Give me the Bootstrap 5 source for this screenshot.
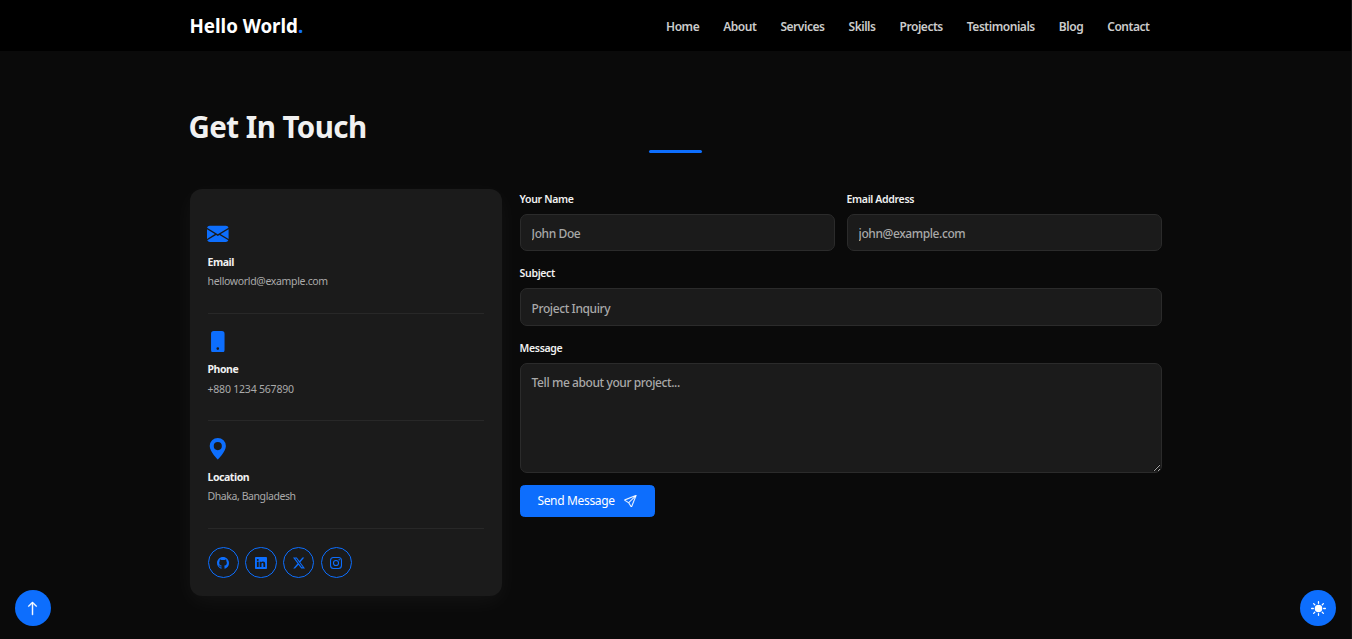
<!DOCTYPE html>
<html lang="en">
<head>
<meta charset="utf-8">
<meta name="viewport" content="width=device-width, initial-scale=1">
<title>Hello World</title>
<link href="https://cdn.jsdelivr.net/npm/bootstrap@5.3.0/dist/css/bootstrap.min.css" rel="stylesheet">
<style>
  body{background:#0a0a0a;color:#f1f1f1;font-family:"Noto Sans",sans-serif;font-size:12px;height:639px;overflow:hidden;border-right:1px solid #141414}
  .page-wrap{width:972px;max-width:100%;margin:0 auto}
  .navbar{height:51px;background:#000}
  .brand-name{font-size:18.75px;font-weight:700;color:#fff;letter-spacing:-.02px;line-height:27px}
  .brand-name span{color:#0d6efd}
  .menu-links{gap:24px;padding-right:12px}
  .menu-links .nav-link{color:#ccc;font-weight:600;font-size:12px;line-height:18px;letter-spacing:-.46px;padding:2px 0 0}
  .section-head{height:138px;padding-top:58px}
  .section-head h2{font-size:29.5px;font-weight:700;line-height:36px;margin:0 0 0 -1px;height:36px;letter-spacing:-.55px}
  .head-bar{width:52.5px;height:3px;border-radius:2px;background:#0d6efd;margin:5px auto 0}
  .info-card{width:312px;height:407px;background:#1b1b1b;border-radius:12px;padding:17.4px 18px 0;box-shadow:0 6px 22px rgba(255,255,255,.045)}
  .info-item{height:107.5px;border-bottom:1px solid #282828;padding-top:16.8px}
  .info-item svg{width:21.6px;height:21.6px;display:block;fill:#0d6efd;margin-left:-.6px}
  .info-item h5{font-size:10.5px;font-weight:700;line-height:14px;margin:9.8px 0 0;letter-spacing:-.45px}
  .info-item p{font-size:10.5px;line-height:16px;margin:4.5px 0 0;color:#aaa;letter-spacing:-.33px}
  .social-row{gap:6.2px;padding-top:18px}
  .social-btn{width:31.5px;height:31.5px;border:1px solid #0d6efd;border-radius:50%}
  .social-btn svg{width:12px;height:12px;fill:#0d6efd}
  .contact-form{width:642px;margin-right:-.1px}
  .form-label{font-size:10.5px;font-weight:600;line-height:16px;margin:0 0 6.9px;letter-spacing:-.33px;display:block;padding-top:2px}
  .form-control,.form-control:focus{background:#1b1b1b;border:1px solid #2b2b2b;color:#eee;border-radius:7px;height:37.5px;font-size:12px;line-height:18px;padding:10px 11px 8px;letter-spacing:-.41px;box-shadow:none}
  .form-control::placeholder{color:#a9a9a9;opacity:1;font-weight:500}
  textarea.form-control{height:110px}
  .send-btn{width:135px;height:32px;font-size:12px;border-radius:4.5px;padding:1px 0 0;margin-top:12px;background:#0d6efd;letter-spacing:-.33px}
  .send-btn svg{margin-left:9.5px}
  .round-btn{width:36px;height:36px;bottom:13px;background:#0d6efd;border:0;border-radius:50%;padding:0}
</style>
</head>
<body>
<nav class="navbar p-0">
  <div class="page-wrap d-flex align-items-center justify-content-between">
    <a class="brand-name text-decoration-none" href="#">Hello World<span>.</span></a>
    <div class="nav menu-links">
      <a class="nav-link" href="#">Home</a><a class="nav-link" href="#">About</a><a class="nav-link" href="#">Services</a><a class="nav-link" href="#">Skills</a><a class="nav-link" href="#">Projects</a><a class="nav-link" href="#">Testimonials</a><a class="nav-link" href="#">Blog</a><a class="nav-link" href="#">Contact</a>
    </div>
  </div>
</nav>
<main class="page-wrap">
  <header class="section-head"><h2>Get In Touch</h2><div class="head-bar"></div></header>
  <div class="d-flex justify-content-between align-items-start">
    <aside class="info-card">
      <div class="info-item">
        <svg viewBox="0 0 16 16"><path d="M.05 3.555A2 2 0 0 1 2 2h12a2 2 0 0 1 1.95 1.555L8 8.414.05 3.555ZM0 4.697v7.104l5.803-3.558L0 4.697ZM6.761 8.83l-6.57 4.027A2 2 0 0 0 2 14h12a2 2 0 0 0 1.808-1.144l-6.57-4.027L8 9.586l-1.239-.757Zm3.436-.586L16 11.801V4.697l-5.803 3.546Z"/></svg>
        <h5>Email</h5><p>helloworld@example.com</p>
      </div>
      <div class="info-item">
        <svg viewBox="0 0 16 16"><path d="M3 2a2 2 0 0 1 2-2h6a2 2 0 0 1 2 2v12a2 2 0 0 1-2 2H5a2 2 0 0 1-2-2V2zm6 11a1 1 0 1 0-2 0 1 1 0 0 0 2 0z"/></svg>
        <h5>Phone</h5><p style="letter-spacing:-.2px">+880 1234 567890</p>
      </div>
      <div class="info-item">
        <svg viewBox="0 0 16 16"><path d="M8 16s6-5.686 6-10A6 6 0 0 0 2 6c0 4.314 6 10 6 10zm0-7a3 3 0 1 1 0-6 3 3 0 0 1 0 6z"/></svg>
        <h5>Location</h5><p style="letter-spacing:-.42px">Dhaka, Bangladesh</p>
      </div>
      <div class="d-flex social-row">
        <a class="social-btn d-flex align-items-center justify-content-center" href="#"><svg viewBox="0 0 16 16"><path d="M8 0C3.58 0 0 3.58 0 8c0 3.54 2.29 6.53 5.47 7.59.4.07.55-.17.55-.38 0-.19-.01-.82-.01-1.49-2.01.37-2.53-.49-2.69-.94-.09-.23-.48-.94-.82-1.13-.28-.15-.68-.52-.01-.53.63-.01 1.08.58 1.23.82.72 1.21 1.87.87 2.33.66.07-.52.28-.87.51-1.07-1.78-.2-3.64-.89-3.64-3.95 0-.87.31-1.59.82-2.15-.08-.2-.36-1.02.08-2.12 0 0 .67-.21 2.2.82.64-.18 1.32-.27 2-.27.68 0 1.36.09 2 .27 1.53-1.04 2.2-.82 2.2-.82.44 1.1.16 1.92.08 2.12.51.56.82 1.27.82 2.15 0 3.07-1.87 3.75-3.65 3.95.29.25.54.73.54 1.48 0 1.07-.01 1.93-.01 2.2 0 .21.15.46.55.38A8.012 8.012 0 0 0 16 8c0-4.42-3.58-8-8-8z"/></svg></a>
        <a class="social-btn d-flex align-items-center justify-content-center" href="#"><svg viewBox="0 0 16 16"><path d="M0 1.146C0 .513.526 0 1.175 0h13.65C15.474 0 16 .513 16 1.146v13.708c0 .633-.526 1.146-1.175 1.146H1.175C.526 16 0 15.487 0 14.854V1.146zm4.943 12.248V6.169H2.542v7.225h2.401zm-1.2-8.212c.837 0 1.358-.554 1.358-1.248-.015-.709-.52-1.248-1.342-1.248-.822 0-1.359.54-1.359 1.248 0 .694.521 1.248 1.327 1.248h.016zm4.908 8.212V9.359c0-.216.016-.432.08-.586.173-.431.568-.878 1.232-.878.869 0 1.216.662 1.216 1.634v3.865h2.401V9.25c0-2.22-1.184-3.252-2.764-3.252-1.274 0-1.845.7-2.165 1.193v.025h-.016l.016-.025V6.169h-2.4c.03.678 0 7.225 0 7.225h2.4z"/></svg></a>
        <a class="social-btn d-flex align-items-center justify-content-center" href="#"><svg viewBox="0 0 16 16"><path d="M12.6.75h2.454l-5.36 6.142L16 15.25h-4.937l-3.867-5.07-4.425 5.07H.316l5.733-6.57L0 .75h5.063l3.495 4.633L12.601.75Zm-.86 13.028h1.36L4.323 2.145H2.865l8.875 11.633Z"/></svg></a>
        <a class="social-btn d-flex align-items-center justify-content-center" href="#"><svg viewBox="0 0 16 16"><path fill-rule="evenodd" d="M4.7 0h6.6A4.7 4.7 0 0 1 16 4.7v6.6a4.7 4.7 0 0 1-4.7 4.7H4.7A4.7 4.7 0 0 1 0 11.3V4.7A4.7 4.7 0 0 1 4.7 0zm0 1.44A3.26 3.26 0 0 0 1.44 4.7v6.6a3.26 3.26 0 0 0 3.26 3.26h6.6a3.26 3.26 0 0 0 3.26-3.26V4.7a3.26 3.26 0 0 0-3.26-3.26H4.7zM8 3.89a4.11 4.11 0 1 1 0 8.22 4.11 4.11 0 0 1 0-8.22zm0 1.44a2.67 2.67 0 1 0 0 5.34 2.67 2.67 0 0 0 0-5.34zm4.27-2.56a.96.96 0 1 1 0 1.92.96.96 0 0 1 0-1.92z"/></svg></a>
      </div>
    </aside>
    <form class="contact-form">
      <div class="d-flex" style="gap:12px">
        <div class="flex-fill"><label class="form-label" for="n">Your Name</label><input id="n" class="form-control" placeholder="John Doe"></div>
        <div class="flex-fill"><label class="form-label" for="e">Email Address</label><input id="e" class="form-control" placeholder="john@example.com"></div>
      </div>
      <div class="pt-2 mt-1"><label class="form-label" for="s">Subject</label><input id="s" class="form-control" placeholder="Project Inquiry"></div>
      <div class="pt-2 mt-1"><label class="form-label" for="m">Message</label><textarea id="m" class="form-control" placeholder="Tell me about your project..."></textarea></div>
      <button type="button" class="btn btn-primary send-btn d-flex align-items-center justify-content-center">Send Message
        <svg width="12.5" height="12.5" fill="currentColor" stroke="currentColor" stroke-width=".3" viewBox="0 0 16 16"><path d="M15.854.146a.5.5 0 0 1 .11.54l-5.819 14.547a.75.75 0 0 1-1.329.124l-3.178-4.995L.643 7.184a.75.75 0 0 1 .124-1.33L15.314.037a.5.5 0 0 1 .54.11ZM6.636 10.07l2.761 4.338L14.13 2.576 6.636 10.07Zm6.787-8.201L1.591 6.602l4.339 2.76 7.494-7.493Z"/></svg></button>
    </form>
  </div>
</main>
<button type="button" class="btn btn-primary round-btn position-fixed d-flex align-items-center justify-content-center" style="left:15px" aria-label="Back to top"><svg width="15" height="15" fill="#fff" viewBox="0 0 16 16" style="margin-right:1px"><path fill-rule="evenodd" d="M8 15a.5.5 0 0 0 .5-.5V2.707l3.146 3.147a.5.5 0 0 0 .708-.708l-4-4a.5.5 0 0 0-.708 0l-4 4a.5.5 0 1 0 .708.708L7.5 2.707V14.5a.5.5 0 0 0 .5.5z" stroke="#fff" stroke-width=".5"/></svg></button>
<button type="button" class="btn btn-primary round-btn position-fixed d-flex align-items-center justify-content-center" style="right:16px" aria-label="Toggle theme"><svg width="15" height="15" fill="#fff" viewBox="0 0 16 16"><circle cx="8" cy="8" r="4"/><path stroke="#fff" stroke-width="1.400" stroke-linecap="round" d="M8 .7v1.800M8 13.500v1.800M.7 8h1.800M13.500 8h1.800M2.800 2.800l1.200 1.200M12 12l1.200 1.200M2.800 13.200l1.200-1.200M12 4l1.200-1.200"/></svg></button>
</body>
</html>
